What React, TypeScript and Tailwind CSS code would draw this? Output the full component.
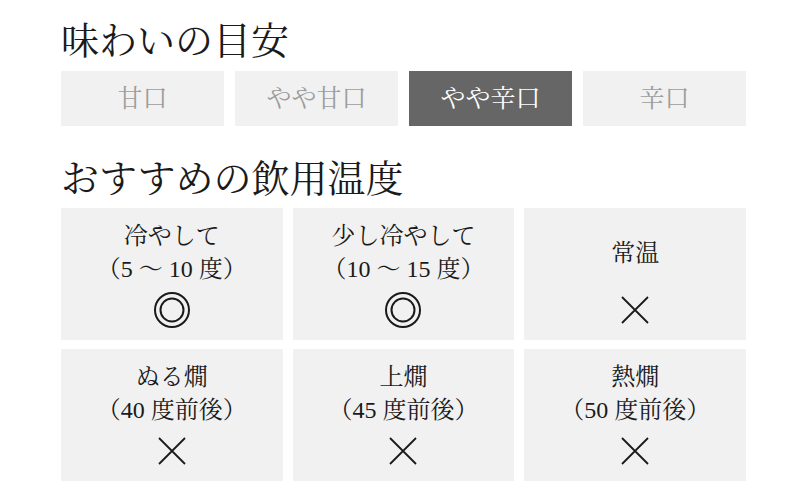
const font = {
  fontFamily:
    '"Liberation Serif", "Noto Serif CJK JP", "Noto Sans CJK JP", serif',
};

type Mark = "double" | "cross";

interface TempCell {
  label: string;
  sub?: string;
  mark: Mark;
}

const tastes = ["甘口", "やや甘口", "やや辛口", "辛口"];
const activeTaste = 2;

const temps: TempCell[] = [
  { label: "冷やして", sub: "（5 ～ 10 度）", mark: "double" },
  { label: "少し冷やして", sub: "（10 ～ 15 度）", mark: "double" },
  { label: "常温", mark: "cross" },
  { label: "ぬる燗", sub: "（40 度前後）", mark: "cross" },
  { label: "上燗", sub: "（45 度前後）", mark: "cross" },
  { label: "熱燗", sub: "（50 度前後）", mark: "cross" },
];

function MarkIcon({ mark }: { mark: Mark }) {
  if (mark === "double") {
    return (
      <svg width="38" height="38" viewBox="0 0 38 38" fill="none" stroke="#1a1a1a">
        <circle cx="19" cy="19" r="17" strokeWidth="2" />
        <circle cx="19" cy="19" r="11.5" strokeWidth="2" />
      </svg>
    );
  }
  return (
    <svg width="30" height="30" viewBox="0 0 30 30" fill="none" stroke="#1a1a1a" strokeWidth="1.8">
      <path d="M2 2 L28 28 M28 2 L2 28" />
    </svg>
  );
}

export default function App() {
  return (
    <div className="h-[500px] w-[800px] bg-white pl-[61px] pr-[54px] text-[#1a1a1a]" style={font}>
      <h1 className="pt-[18px] text-[38px] font-normal leading-[46px]">味わいの目安</h1>

      {/* 味わい */}
      <div className="mt-[7px] grid grid-cols-4 gap-[11px]">
        {tastes.map((t, i) => (
          <div
            key={t}
            className={
              i === activeTaste
                ? "flex h-[55px] items-center justify-center bg-[#666666] text-[25px] text-white"
                : "flex h-[55px] items-center justify-center bg-[#f1f1f1] text-[25px] text-[#9c9c9c]"
            }
          >
            {t}
          </div>
        ))}
      </div>

      <h2 className="mt-[30px] text-[38px] font-normal leading-[46px]">おすすめの飲用温度</h2>

      {/* 温度 */}
      <div className="mt-[6px] grid grid-cols-3 gap-x-[10px] gap-y-[9px]">
        {temps.map((c) => (
          <div key={c.label} className="flex h-[132px] flex-col items-center bg-[#f1f1f1]">
            <div className="mt-[8px] flex h-[74px] flex-col items-center justify-center text-[24px] leading-[33px]">
              <span>{c.label}</span>
              {c.sub && <span>{c.sub}</span>}
            </div>
            <div className="flex h-[40px] items-center justify-center">
              <MarkIcon mark={c.mark} />
            </div>
          </div>
        ))}
      </div>
    </div>
  );
}
